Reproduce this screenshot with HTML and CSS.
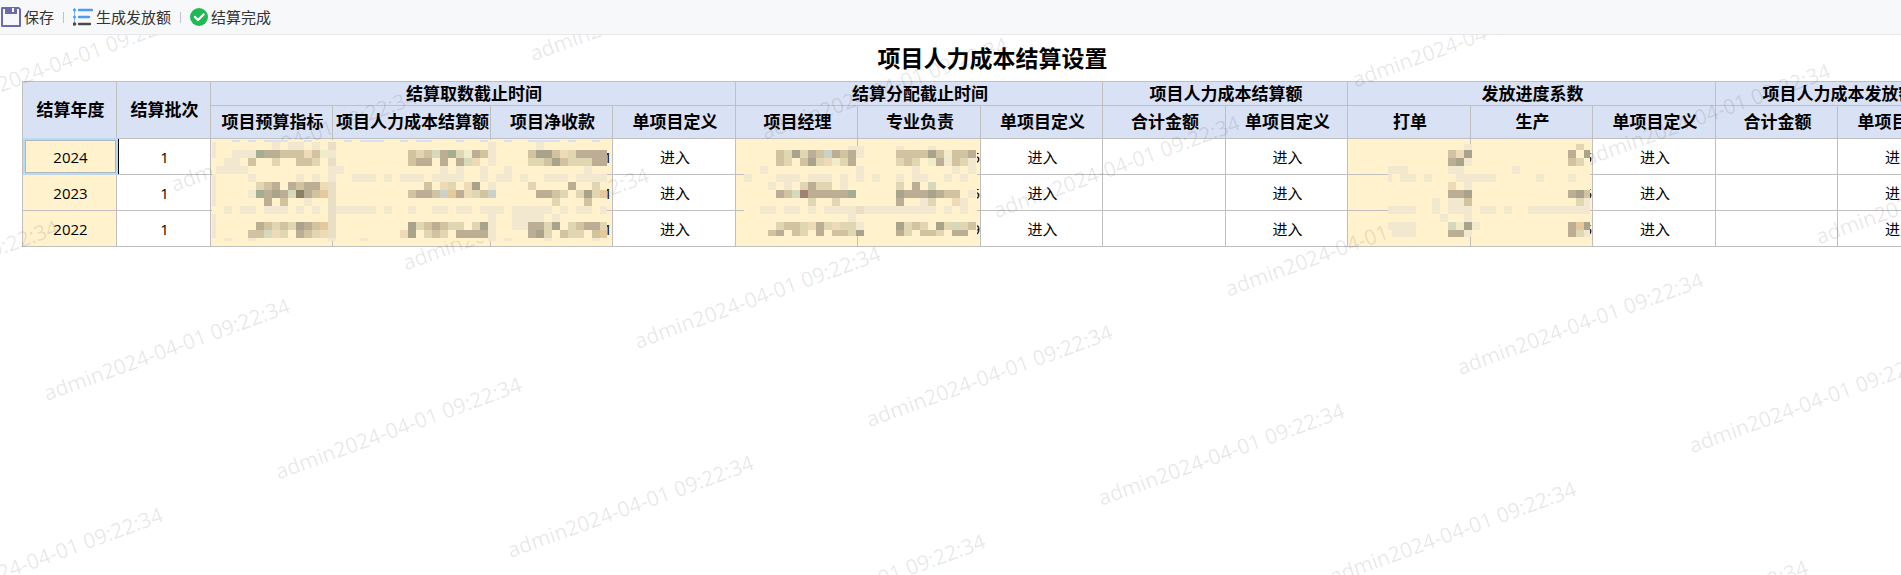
FILE: index.html
```html
<!DOCTYPE html>
<html lang="zh-CN">
<head>
<meta charset="utf-8">
<title>项目人力成本结算设置</title>
<link rel="stylesheet" href="styles.css">
</head>
<body>
<header class="toolbar">
  <button class="tool" type="button">
    <svg class="icon" width="20" height="20" viewBox="0 0 20 20" aria-hidden="true">
      <path fill="#6b6cad" fill-rule="evenodd" d="M1 0h17l2 2v17a1 1 0 0 1-1 1H1a1 1 0 0 1-1-1V1a1 1 0 0 1 1-1zM2 2v16h16V2z"/>
      <path fill="#6b6cad" d="M4 0h12v7H4z"/>
      <path fill="#f7f8fa" d="M11 1h2v4h-2z"/>
    </svg>
    <span>保存</span>
  </button>
  <span class="divider"></span>
  <button class="tool" type="button">
    <svg class="icon" width="20" height="20" viewBox="0 0 20 20" aria-hidden="true">
      <g fill="none" stroke-width="2.400" stroke-linecap="round">
        <path stroke="#4a9bf5" d="M6 3h13M6 10h10"/>
        <path stroke="#4a4a4a" d="M6 17h11"/>
      </g>
      <path stroke="#7db6f3" fill="none" d="M1.500 1v14"/>
      <circle cx="1.500" cy="3" r="1.500" fill="#4a9bf5"/>
      <circle cx="1.500" cy="10" r="1.500" fill="#4a9bf5"/>
      <circle cx="1.500" cy="17" r="1.800" fill="#4a4a4a"/>
    </svg>
    <span>生成发放额</span>
  </button>
  <span class="divider"></span>
  <button class="tool" type="button">
    <svg class="icon" width="18" height="18" viewBox="0 0 18 18" aria-hidden="true">
      <circle cx="9" cy="9" r="9" fill="#1fb955"/>
      <path d="M5 9l3 3 5.500-5.500" fill="none" stroke="#fff" stroke-width="2.400" stroke-linecap="round" stroke-linejoin="round"/>
    </svg>
    <span>结算完成</span>
  </button>
</header>
<main class="sheet">
  <table class="grid">
    <caption>项目人力成本结算设置</caption>
    <colgroup>
      <col class="w-key"><col class="w-key">
      <col class="w-std"><col class="w-wide"><col class="w-std"><col class="w-def">
      <col class="w-std"><col class="w-def"><col class="w-std">
      <col class="w-def"><col class="w-std">
      <col class="w-def"><col class="w-std"><col class="w-def">
      <col class="w-std"><col class="w-def">
    </colgroup>
    <thead>
      <tr class="head-top">
        <th rowspan="2">结算年度</th><th rowspan="2">结算批次</th>
        <th colspan="4">结算取数截止时间</th><th colspan="3">结算分配截止时间</th>
        <th colspan="2">项目人力成本结算额</th><th colspan="3">发放进度系数</th>
        <th colspan="2">项目人力成本发放额</th>
      </tr>
      <tr class="head-sub">
        <th>项目预算指标</th><th>项目人力成本结算额</th><th>项目净收款</th><th>单项目定义</th>
        <th>项目经理</th><th>专业负责</th><th>单项目定义</th>
        <th>合计金额</th><th>单项目定义</th>
        <th>打单</th><th>生产</th><th>单项目定义</th>
        <th>合计金额</th><th>单项目定义</th>
      </tr>
    </thead>
    <tbody>
      <tr>
        <td class="fill selected">2024</td><td>1</td>
        <td class="fill"></td><td class="fill"></td><td class="fill num">1</td><td><a href="#">进入</a></td>
        <td class="fill"></td><td class="fill num">5</td><td><a href="#">进入</a></td>
        <td></td><td><a href="#">进入</a></td>
        <td class="fill"></td><td class="fill num">5</td><td><a href="#">进入</a></td>
        <td></td><td><a href="#">进入</a></td>
      </tr>
      <tr>
        <td class="fill">2023</td><td>1</td>
        <td class="fill"></td><td class="fill"></td><td class="fill num">1</td><td><a href="#">进入</a></td>
        <td class="fill"></td><td class="fill num">5</td><td><a href="#">进入</a></td>
        <td></td><td><a href="#">进入</a></td>
        <td class="fill"></td><td class="fill num">5</td><td><a href="#">进入</a></td>
        <td></td><td><a href="#">进入</a></td>
      </tr>
      <tr>
        <td class="fill">2022</td><td>1</td>
        <td class="fill"></td><td class="fill"></td><td class="fill num">1</td><td><a href="#">进入</a></td>
        <td class="fill"></td><td class="fill num">9</td><td><a href="#">进入</a></td>
        <td></td><td><a href="#">进入</a></td>
        <td class="fill"></td><td class="fill num">5</td><td><a href="#">进入</a></td>
        <td></td><td><a href="#">进入</a></td>
      </tr>
    </tbody>
  </table>
  <svg class="watermark" aria-hidden="true">
    <g transform="translate(0 -35) rotate(-20)">
      <text x="-93" y="87">admin2024-04-01 09:22:34</text>
      <text x="-284" y="240">admin2024-04-01 09:22:34</text>
      <text x="98" y="240">admin2024-04-01 09:22:34</text>
      <text x="480" y="240">admin2024-04-01 09:22:34</text>
      <text x="-93" y="393">admin2024-04-01 09:22:34</text>
      <text x="289" y="393">admin2024-04-01 09:22:34</text>
      <text x="671" y="393">admin2024-04-01 09:22:34</text>
      <text x="-284" y="546">admin2024-04-01 09:22:34</text>
      <text x="98" y="546">admin2024-04-01 09:22:34</text>
      <text x="480" y="546">admin2024-04-01 09:22:34</text>
      <text x="862" y="546">admin2024-04-01 09:22:34</text>
      <text x="1244" y="546">admin2024-04-01 09:22:34</text>
      <text x="289" y="699">admin2024-04-01 09:22:34</text>
      <text x="671" y="699">admin2024-04-01 09:22:34</text>
      <text x="1053" y="699">admin2024-04-01 09:22:34</text>
      <text x="1435" y="699">admin2024-04-01 09:22:34</text>
      <text x="480" y="852">admin2024-04-01 09:22:34</text>
      <text x="862" y="852">admin2024-04-01 09:22:34</text>
      <text x="1244" y="852">admin2024-04-01 09:22:34</text>
      <text x="1626" y="852">admin2024-04-01 09:22:34</text>
      <text x="1053" y="1005">admin2024-04-01 09:22:34</text>
      <text x="1435" y="1005">admin2024-04-01 09:22:34</text>
      <text x="1244" y="1158">admin2024-04-01 09:22:34</text>
    </g>
  </svg>
  <svg class="mosaic" id="mosaic" aria-hidden="true"></svg>
</main>
<script src="mosaic.js"></script>
</body>
</html>
```
FILE: styles.css
```css
* { box-sizing: border-box; }

body {
  margin: 0;
  height: 100vh;
  display: flex;
  flex-direction: column;
  overflow: hidden;
  background: #fff;
  color: #000;
  font-family: "Open Sans", "Noto Sans CJK SC", sans-serif;
  font-size: 15px;
}

.toolbar {
  flex: none;
  display: flex;
  align-items: center;
  gap: 9px;
  height: 35px;
  padding-left: 1px;
  background: #f7f8fa;
  border-bottom: 1px solid #e6e8ec;
}

.tool {
  display: flex;
  align-items: center;
  gap: 3px;
  padding: 0;
  border: 0;
  background: none;
  color: #333;
  font-family: "Noto Sans CJK SC", sans-serif;
  font-size: 15px;
  line-height: 20px;
}

.icon { display: block; flex: none; }

.divider {
  width: 1px;
  height: 11px;
  background: #bfc3c9;
}

.sheet {
  position: relative;
  flex: 1;
  overflow: hidden;
}

.grid {
  width: 1939px;
  margin-left: 22px;
  border-collapse: collapse;
  table-layout: fixed;
}

.grid caption {
  height: 46px;
  padding-left: 2px;
  font-size: 23px;
  font-weight: 700;
  line-height: 46px;
}

.w-key { width: 94px; }
.w-std { width: 122px; }
.w-def { width: 123px; }
.w-wide { width: 158px; }

.grid th,
.grid td {
  padding: 0 0 0 2px;
  border: 1px solid #bfbfbf;
  text-align: center;
  white-space: nowrap;
  line-height: 20px;
}

.grid th {
  background: #d9e1f4;
  font-size: 17px;
  font-weight: 700;
}

.head-top { height: 24px; }
.head-sub { height: 33px; }
tbody tr { height: 36px; }

.grid .fill { background: #fff2cc; }

.grid .num {
  padding: 0;
  text-align: right;
}

.grid a {
  color: #000;
  text-decoration: none;
}

.grid .selected { position: relative; }

.grid .selected::before {
  content: "";
  position: absolute;
  inset: 1px 0 1px 2px;
  border: 1px solid #b4b4bc;
  outline: 2px solid #b9dbf2;
}

.grid .selected::after {
  content: "";
  position: absolute;
  top: 0;
  bottom: 0;
  left: 100%;
  margin-left: 2px;
  border-left: 1px solid #000;
}

.watermark,
.mosaic {
  position: absolute;
  inset: 0;
  width: 100%;
  height: 100%;
  pointer-events: none;
}

.watermark text {
  fill: #000;
  fill-opacity: 0.1;
  font-family: "Open Sans", sans-serif;
  font-size: 21px;
  font-weight: 500;
}
```
FILE: mosaic.js
```js
// Masked values: each character is one 8px block of a colour.
const colours = {
  f: '#f1e8cf', e: '#e9dfc6', l: '#f0ebc8', 1: '#d1c3a0', 2: '#bbae94',
  3: '#a9a38c', 4: '#a2ad92', 5: '#d3d9ba', 6: '#eedab6', 7: '#e5c99b',
  8: '#8a8068', 9: '#e0d6b1', b: '#c9d2c6', p: '#a38070', s: '#d9e1f4'
};

const areas = [
  {
    x: 208, left: 212, right: 607, top: 140, bottom: 241,
    rows: [
      '...s.s.sss..s....s.sss..s.ss...s..s..s..ssss.s..s.',
      'f.......f.ff.f.e...................f.....f........',
      'f..fff42211161lf.........1915249l21f....1331692222',
      '..ff.1..9..119.e.........122.2.256.f....9913199922',
      '.ffff..........ff............f.f..f..f.........f..',
      'f....f.....f.f.f..fff.f.fff.ffff..f.ff.f..fff.ffff',
      'f.....912.21226e...........1.69.63.f....9....2..9.',
      'f....f423258217e.........1221b72691b.....2219.9397',
      'f......2.1..f..e...........................9...1..',
      '..f.ff.fff.f.f.efffff.f..f..ff.ff.fff.fffff.f.ff.f',
      'f..............e...................f..ffff.f......',
      'f.....219193217e.........3912199.93f..ff2293.91229',
      'f....11569.2196e........63.919.2222f....239.199.17',
      '..f..f.........f...f...............f.f....f.....f.'
    ]
  },
  {
    x: 744, left: 744, right: 977, top: 146, bottom: 236,
    rows: [
      '',
      '.............ff....f...f.....',
      '....193921b212f....111131l112',
      '....19.1396l92.....919.l2f19f',
      '..f...........f......f....f.f',
      'f...fff.fff.f.f.f..f.ff..f.f.',
      '...f.f.9299.f......9.2.5.....',
      '....215p222224.....32223211.f',
      '........9..9.......2..f9..6f.',
      '..ff.ff.f.ffffefffffffff.f.f.',
      '.............f...............',
      '....9119629699f....3919.39591',
      '...12.19.2.1193....29.119.22.'
    ]
  },
  {
    x: 1384, left: 1388, right: 1590, top: 144, bottom: 237,
    rows: [
      '',
      '..........f.............9.',
      '........163............2.3',
      '........23f............19.',
      'fff.....ff......f.........',
      'f.ff.f...fffff.....f...f..',
      '........6.f...............',
      '........223............231',
      '......f.ff1.............9f',
      'ffff..f.fff.ff.f..ffffffff',
      '.......f..f...............',
      'ffff....5l3f...........273',
      '.fff....22f............29f'
    ]
  }
];

const svg = document.getElementById('mosaic');
const block = 8;
const firstRow = 134;
const sheetTop = 35;

function addRect(left, top, right, bottom, colour) {
  const rect = document.createElementNS('http://www.w3.org/2000/svg', 'rect');
  rect.setAttribute('x', left);
  rect.setAttribute('y', top - sheetTop);
  rect.setAttribute('width', Math.max(0, right - left));
  rect.setAttribute('height', Math.max(0, bottom - top));
  rect.setAttribute('fill', colour);
  svg.appendChild(rect);
}

for (const area of areas) {
  addRect(area.left, area.top, area.right, area.bottom, '#fff2cc');
  area.rows.forEach((row, r) => {
    [...row].forEach((key, c) => {
      if (!colours[key]) return;
      const x = area.x + c * block;
      const y = firstRow + r * block;
      addRect(
        Math.max(x, area.left), Math.max(y, area.top),
        Math.min(x + block, area.right), Math.min(y + block, area.bottom),
        colours[key]
      );
    });
  });
}
```
